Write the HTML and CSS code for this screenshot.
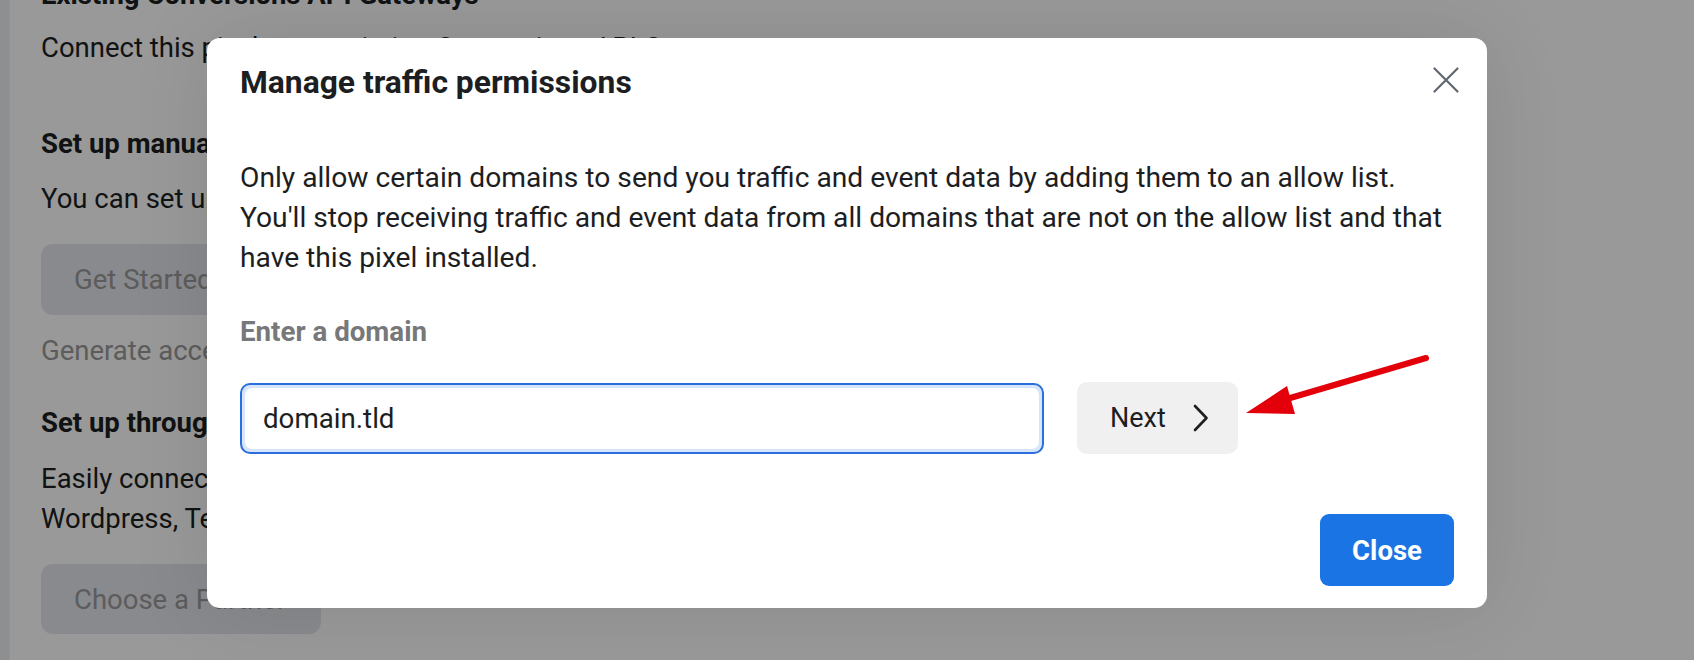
FILE: index.html
```html
<!DOCTYPE html>
<html lang="en">
<head>
<meta charset="utf-8">
<title>Manage traffic permissions</title>
<link rel="stylesheet" href="styles.css">
</head>
<body>
<div class="page">
  <div class="side"></div>
  <main class="content">
    <h3 class="heading first">Existing Conversions API Gateways</h3>
    <p class="text">Connect this pixel to an existing Conversions API Gateway.</p>
    <h3 class="heading manual">Set up manually</h3>
    <p class="text tight">You can set up Conversions API manually by adding code to your website server.</p>
    <button class="bg-btn get">Get Started</button>
    <p class="text muted">Generate access token</p>
    <h3 class="heading partner">Set up through a partner integration</h3>
    <p class="text tight">Easily connect your website through a partner platform like Shopify,<br>Wordpress, Tealium and more.</p>
    <button class="bg-btn choose">Choose a Partner</button>
  </main>
</div>

<div class="overlay">
  <div class="modal" role="dialog">
    <div class="modal-head">
      <h2 class="modal-title">Manage traffic permissions</h2>
      <button class="close-x" aria-label="Close">
        <svg width="26" height="26" viewBox="0 0 26 26"><path d="M1.5 1.5 L24.5 24.5 M24.5 1.5 L1.5 24.5" stroke="#606770" stroke-width="2.2" stroke-linecap="round" fill="none"/></svg>
      </button>
    </div>
    <p class="modal-text">Only allow certain domains to send you traffic and event data by adding them to an allow list.<br>You'll stop receiving traffic and event data from all domains that are not on the allow list and that<br>have this pixel installed.</p>
    <label class="field-label" for="domain">Enter a domain</label>
    <div class="field-row">
      <div class="input-wrap"><input id="domain" class="domain-input" type="text" value="domain.tld"></div>
      <button class="next-btn">Next
        <svg width="16" height="28" viewBox="0 0 16 28"><path d="M2 2 L13.5 14 L2 26" stroke="#1c1e21" stroke-width="2.6" fill="none" stroke-linecap="round" stroke-linejoin="round"/></svg>
      </button>
    </div>
    <div class="modal-foot">
      <button class="close-btn">Close</button>
    </div>
  </div>
</div>

<svg class="annotation" width="1694" height="660" viewBox="0 0 1694 660">
  <line x1="1426" y1="358" x2="1280" y2="401" stroke="#e3000b" stroke-width="6" stroke-linecap="round"/>
  <polygon points="1246,413 1287,386 1295,414" fill="#e3000b"/>
</svg>
</body>
</html>
```

FILE: styles.css
```css
* { box-sizing: border-box; }
html, body { margin: 0; padding: 0; }
body {
  width: 1694px;
  height: 660px;
  overflow: hidden;
  font-family: Roboto, "Noto Sans", "Liberation Sans", sans-serif;
  background: #ffffff;
  color: #1c1e21;
  position: relative;
}

.page {
  display: flex;
  height: 660px;
}
.side {
  width: 10px;
  background: #eceef0;
  border-right: 1px solid #f7f7f7;
  flex: none;
}
.content {
  padding-left: 31px;
  margin-top: -25px;
  font-size: 27.5px;
  line-height: 40px;
}
.heading {
  margin: 0;
  font-size: 27.5px;
  line-height: 40px;
  font-weight: 700;
  color: #1c1e21;
}
.text { margin: 0; color: #1c1e21; }
.heading.first { margin-bottom: 13px; }
.heading.manual { margin-top: 56px; margin-bottom: 15px; }
.heading.partner { margin-top: 32px; margin-bottom: 16px; }
.text.tight { margin-bottom: 25px; }
.text.muted { color: #9a9a9a; margin-top: 16px; }
.bg-btn {
  display: block;
  height: 71px;
  padding: 0 33px;
  border: none;
  border-radius: 12px;
  background: #e4e6eb;
  color: #9a9a9a;
  font-family: inherit;
  font-size: 27.5px;
  text-align: left;
}
.bg-btn.get { width: 260px; }
.bg-btn.choose { width: 280px; height: 70px; margin-top: 1px; }

.overlay {
  position: absolute;
  inset: 0;
  background: rgba(0, 0, 0, 0.4);
  display: flex;
  justify-content: center;
  align-items: flex-start;
  padding-top: 38px;
}
.modal {
  width: 1280px;
  height: 570px;
  background: #ffffff;
  border-radius: 13px;
  padding: 26px 33px 22px 33px;
  box-shadow: 0 0 80px rgba(0, 0, 0, 0.10);
  display: flex;
  flex-direction: column;
}
.modal-head {
  display: flex;
  justify-content: space-between;
  align-items: flex-start;
}
.modal-title {
  margin: 0;
  font-size: 31.8px;
  line-height: 36px;
  font-weight: 700;
  color: #1c1e21;
}
.close-x {
  border: none;
  background: none;
  padding: 0;
  width: 26px;
  height: 26px;
  margin-top: 3px;
  margin-right: -5px;
  display: flex;
}
.modal-text {
  margin: 58px 0 0 0;
  font-size: 28.2px;
  line-height: 40px;
  color: #1c1e21;
  white-space: nowrap;
}
.field-label {
  display: block;
  margin-top: 34px;
  font-size: 27.7px;
  line-height: 40px;
  font-weight: 700;
  color: #77787a;
}
.field-row {
  display: flex;
  align-items: center;
  gap: 33px;
  margin-top: 30px;
}
.input-wrap {
  width: 804px;
  height: 71px;
  border: 2px solid #2a6fdb;
  border-radius: 10px;
  padding: 3px;
  background: #d6e5fc;
}
.domain-input {
  width: 100%;
  height: 100%;
  border: none;
  outline: none;
  border-radius: 7px;
  background: #ffffff;
  font-family: inherit;
  font-size: 27.7px;
  color: #1c1e21;
  padding: 0 18px;
}
.next-btn {
  height: 72px;
  width: 161px;
  border: none;
  border-radius: 10px;
  background: #f0f0f0;
  font-family: inherit;
  font-size: 27px;
  color: #1c1e21;
  display: flex;
  align-items: center;
  padding: 0 29px 0 33px;
  justify-content: space-between;
}
.modal-foot {
  margin-top: auto;
  display: flex;
  justify-content: flex-end;
}
.close-btn {
  height: 72px;
  width: 134px;
  border: none;
  border-radius: 9px;
  background: #1b74e4;
  color: #ffffff;
  font-family: inherit;
  font-size: 27.5px;
  font-weight: 700;
}

.annotation {
  position: absolute;
  left: 0;
  top: 0;
  pointer-events: none;
}
```
